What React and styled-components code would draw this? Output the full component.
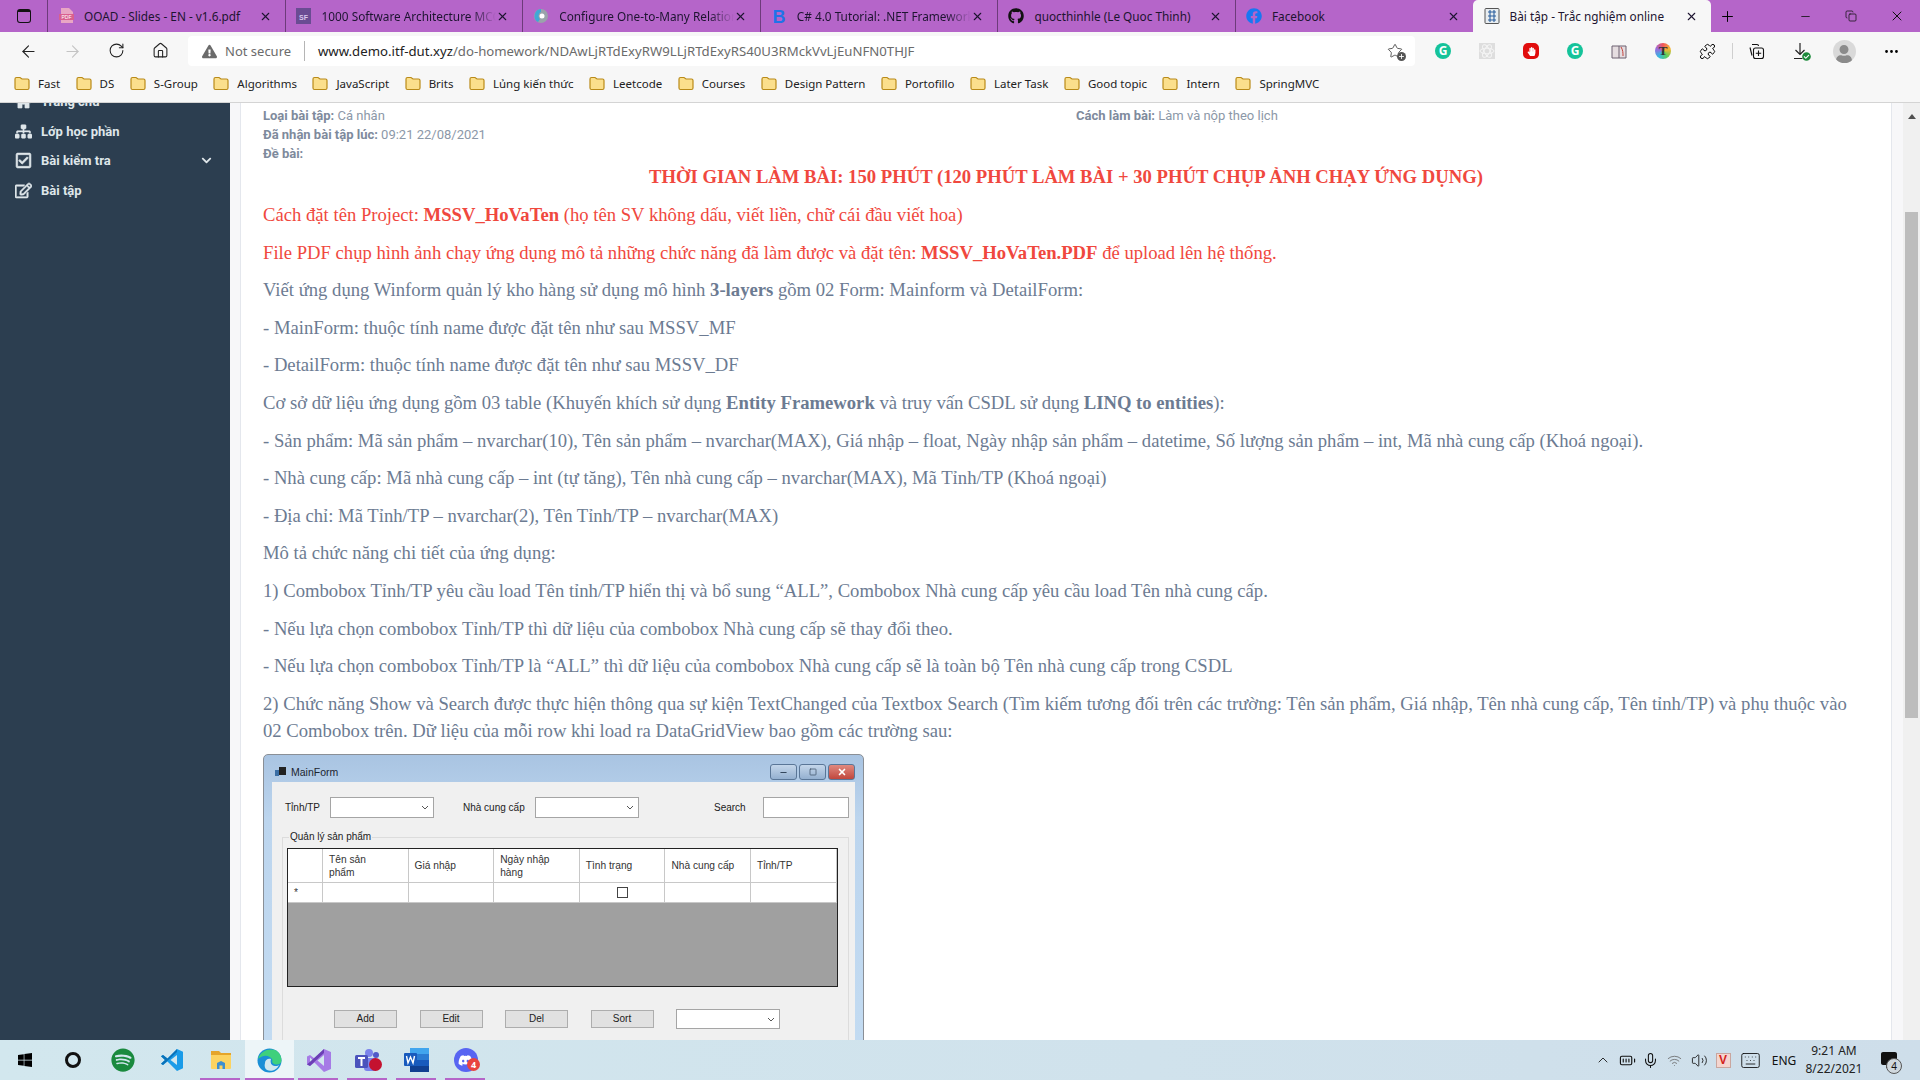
import React from 'react';
import styled, { createGlobalStyle } from 'styled-components';
import {
  ArrowLeft,
  ArrowRight,
  RotateCw,
  Home,
  Puzzle,
  Plus,
  Minus,
  X,
  Copy,
  Square,
  ChevronUp,
  Mic,
  Wifi,
  Volume2,
  Keyboard,
  BatteryFull,
  MoreHorizontal,
  Star,
} from 'lucide-react';
import {
  FaGithub,
  FaFacebook,
  FaSpotify,
  FaWindows,
  FaDiscord,
  FaHome,
  FaSitemap,
  FaRegCheckSquare,
  FaRegEdit,
  FaChevronDown,
  FaHandPaper,
  FaExclamationTriangle,
  FaUser,
  FaCheckCircle,
  FaCommentAlt,
} from 'react-icons/fa';

const UI_FONT = '"Noto Sans", "Open Sans", sans-serif';

const GlobalStyle = createGlobalStyle`
  * { box-sizing: border-box; }
  html, body { margin: 0; padding: 0; height: 100%; overflow: hidden; }
  body { font-family: ${UI_FONT}; background: #fff; }
`;

const Screen = styled.div`
  width: 1920px;
  height: 1080px;
  display: flex;
  flex-direction: column;
  overflow: hidden;
`;

/* ---------- tabs ---------- */
const TabBar = styled.div`
  height: 32px;
  flex: none;
  display: flex;
  align-items: stretch;
  background: #b565c9;
`;
const TabMenu = styled.div`
  width: 47px;
  display: flex;
  align-items: center;
  justify-content: center;
  & > span {
    width: 14px;
    height: 14px;
    border: 1.6px solid #111;
    border-top-width: 3px;
    border-radius: 3px;
  }
`;
const Tab = styled.div`
  width: ${(p) => (p.$active ? '238px' : '237.6px')};
  flex: none;
  display: flex;
  align-items: center;
  padding: 0 10px;
  font-size: 11.8px;
  color: #1d1430;
  background: ${(p) => (p.$active ? '#f7f7f7' : 'transparent')};
  border-radius: ${(p) => (p.$active ? '5px 5px 0 0' : '0')};
  border-left: ${(p) => (p.$active ? '1px solid transparent' : '1px solid #6d3b7a')};
`;
const TabIcon = styled.span`
  width: 16px;
  height: 16px;
  margin-right: 10px;
  flex: none;
  display: flex;
  align-items: center;
  justify-content: center;
  font-size: 16px;
  color: ${(p) => p.$color || '#111'};
`;
const TabTitle = styled.span`
  flex: 1;
  min-width: 0;
  white-space: nowrap;
  overflow: hidden;
  mask-image: ${(p) => (p.$fade ? 'linear-gradient(90deg, #000 86%, transparent)' : 'none')};
`;
const TabClose = styled.span`
  flex: none;
  display: flex;
  margin-right: 3px;
`;
const NewTab = styled.div`
  width: 34px;
  display: flex;
  align-items: center;
  justify-content: center;
`;
const WindowControls = styled.div`
  margin-left: auto;
  display: flex;
`;
const WindowButton = styled.div`
  width: 46px;
  display: flex;
  align-items: center;
  justify-content: center;
  color: #111;
`;

/* ---------- toolbar ---------- */
const Toolbar = styled.div`
  height: 36px;
  flex: none;
  background: #f7f7f7;
  display: flex;
  align-items: center;
  padding-top: 2px;
`;
const NavButton = styled.div`
  width: 44px;
  display: flex;
  justify-content: center;
  color: ${(p) => (p.$off ? '#c4c4c4' : '#222')};
`;
const NavGroup = styled.div`
  display: flex;
  padding-left: 6px;
  width: 188px;
`;
const AddressBar = styled.div`
  width: 1227px;
  height: 30px;
  flex: none;
  background: #fff;
  border-radius: 4px;
  display: flex;
  align-items: center;
  padding: 0 12px 0 14px;
  font-size: 13.2px;
`;
const NotSecure = styled.span`
  display: flex;
  align-items: center;
  gap: 8px;
  color: #6b6b6b;
  width: 103px;
  height: 20px;
  font-size: 13px;
  white-space: nowrap;
  border-right: 1px solid #b5b5b5;
`;
const Url = styled.span`
  margin-left: 13px;
  color: #6b6b6b;
  white-space: nowrap;
  & > b { color: #222; font-weight: 400; }
`;
const StarSlot = styled.span`
  margin-left: auto;
  display: flex;
  position: relative;
  color: #444;
`;
const StarBadge = styled.span`
  position: absolute;
  right: -3px;
  bottom: -2px;
  width: 9px;
  height: 9px;
  border-radius: 50%;
  background: #555;
  color: #fff;
  display: flex;
  align-items: center;
  justify-content: center;
`;
const Extensions = styled.div`
  display: flex;
  align-items: center;
  padding-left: 6px;
`;
const ExtSlot = styled.div`
  width: 44px;
  height: 28px;
  flex: none;
  display: flex;
  align-items: center;
  justify-content: center;
  position: relative;
  margin-left: ${(p) => p.$gap || 0}px;
`;
const ExtDivider = styled.span`
  width: 1px;
  height: 16px;
  margin: 0 1px 0 3px;
  background: #cfcfcf;
`;
const Grammarly = styled.span`
  width: 16px;
  height: 16px;
  border-radius: 50%;
  background: #15c39a;
  color: #fff;
  font: 700 12px/16px ${UI_FONT};
  text-align: center;
`;
const AtomBox = styled.span`
  width: 16px;
  height: 16px;
  background: #dedede;
  display: flex;
`;
const BlockIcon = styled.span`
  width: 16px;
  height: 16px;
  border-radius: 5px;
  background: #e10d0d;
  color: #fff;
  font-size: 9px;
  display: flex;
  align-items: center;
  justify-content: center;
`;
const RainbowT = styled.span`
  width: 16px;
  height: 16px;
  border-radius: 50%;
  background: conic-gradient(#f2555a, #f7b733, #5ad05a, #35b8e0, #9a6be0, #f2555a);
  color: #333;
  font: 700 13px/16px "Liberation Serif", serif;
  text-align: center;
`;
const Avatar = styled.span`
  width: 23px;
  height: 23px;
  border-radius: 50%;
  background: #d9d9d9;
  color: #8b8b8b;
  font-size: 18px;
  display: flex;
  align-items: flex-end;
  justify-content: center;
  overflow: hidden;
`;
const CheckBadge = styled.span`
  position: absolute;
  left: 24px;
  top: 15px;
  display: flex;
  font-size: 9px;
  color: #1e8a3c;
  background: #fff;
  border-radius: 50%;
`;

/* ---------- bookmarks ---------- */
const Bookmarks = styled.div`
  height: 35px;
  flex: none;
  background: #f7f7f7;
  border-bottom: 1px solid #d4d4d4;
  display: flex;
  align-items: center;
  gap: 15.5px;
  padding: 0 0 3px 14px;
`;
const Bookmark = styled.div`
  display: flex;
  align-items: center;
  gap: 8px;
  font-size: 11.5px;
  color: #222;
  white-space: nowrap;
`;

/* ---------- page ---------- */
const Main = styled.div`
  flex: 1;
  min-height: 0;
  display: flex;
  overflow: hidden;
`;
const Sidebar = styled.aside`
  width: 230px;
  flex: none;
  background: #2c3e50;
`;
const NavList = styled.nav`
  margin-top: -16px;
  font-family: Roboto, sans-serif;
`;
const NavItem = styled.div`
  height: 29.5px;
  display: flex;
  align-items: center;
  gap: 9px;
  padding: 0 18px 0 15px;
  font-size: 13px;
  font-weight: 700;
  color: #dfe6ea;
  & > svg:first-child {
    font-size: 17px;
    flex: none;
    width: 17px;
    stroke: currentColor;
    stroke-width: 18;
  }
  & > svg:last-child:not(:first-child) { margin-left: auto; font-size: 11px; }
`;
const Gutter = styled.div`
  width: 11px;
  flex: none;
  background: #f7f7f9;
  border-right: 1px solid #e4e7ed;
`;
const Content = styled.main`
  width: 1651px;
  flex: none;
  background: #fff;
  padding: 4px 22px 0;
  overflow: hidden;
  border-right: 1px solid #e4e7ed;
`;
const MetaGrid = styled.div`
  display: grid;
  height: 55.5px;
  grid-template-columns: 813px 1fr;
  grid-auto-rows: 18.8px;
  font: 400 13px/18.8px Roboto, sans-serif;
  color: #8c98a8;
`;
const MetaLabel = styled.b`
  font-weight: 700;
  color: #7e8a9c;
`;
const Rich = styled.div`
  font: 400 18.67px/27px "Liberation Serif", serif;
  color: #6c7b92;
`;
const Title = styled.div`
  text-align: center;
  font-weight: 700;
  color: #f0483e;
  margin-bottom: 11.5px;
`;
const Para = styled.p`
  margin: 0 0 10.6px;
  color: ${(p) => (p.$red ? '#f0483e' : 'inherit')};
`;
const Rail = styled.div`
  width: 11px;
  flex: none;
  background: #f7f7f9;
`;
const Scrollbar = styled.div`
  width: 17px;
  flex: none;
  background: #f0f0f0;
  display: flex;
  flex-direction: column;
  align-items: center;
  padding-top: 11px;
`;
const ScrollUp = styled.span`
  width: 0;
  height: 0;
  border-left: 4px solid transparent;
  border-right: 4px solid transparent;
  border-bottom: 5px solid #505050;
`;
const ScrollThumb = styled.span`
  width: 13px;
  height: 506px;
  margin-top: 93px;
  background: #bdbdbd;
`;

/* ---------- screenshot of the winform ---------- */
const FormWindow = styled.div`
  width: 601px;
  height: 320px;
  margin-top: 4px;
  background: linear-gradient(#a9c4e2, #bcd5ee 20%, #c4dcf2 100%);
  border: 1px solid #8a8f96;
  border-radius: 5px 5px 0 0;
  padding: 0 8px;
  font: 400 10px/12px "Liberation Sans", sans-serif;
  color: #222;
`;
const FormTitleBar = styled.div`
  height: 27px;
  padding: 7px 0 0 3px;
  display: flex;
  align-items: center;
  gap: 5px;
  font-size: 10.5px;
  color: #1c2530;
`;
const FormButtons = styled.div`
  margin-left: auto;
  display: flex;
  gap: 2px;
`;
const CaptionButton = styled.span`
  width: 27px;
  height: 16px;
  border: 1px solid #5a7697;
  border-radius: 3px;
  background: ${(p) => (p.$close ? 'linear-gradient(#e0897f, #c1473d)' : 'linear-gradient(#c4d6ea, #94b0d0)')};
  color: ${(p) => (p.$close ? '#fff' : '#33475c')};
  display: flex;
  align-items: center;
  justify-content: center;
`;
const FormPanel = styled.div`
  background: #f0f0f0;
  height: 290px;
  padding: 15px 8px 0 13px;
`;
const FilterRow = styled.div`
  display: flex;
  align-items: center;
  height: 21px;
`;
const FormLabel = styled.span`
  width: ${(p) => p.$w}px;
  margin-left: ${(p) => p.$gap || 0}px;
  flex: none;
  white-space: nowrap;
`;
const Combo = styled.span`
  width: ${(p) => p.$w || 104}px;
  height: ${(p) => p.$h || 21}px;
  margin-left: ${(p) => p.$gap || 0}px;
  flex: none;
  background: #fff;
  border: 1px solid #a5a5a5;
  display: flex;
  align-items: center;
  justify-content: flex-end;
  padding-right: 4px;
  color: #555;
`;
const GroupBox = styled.fieldset`
  margin: 13px 0 0 -3px;
  padding: 5px 0 0 4px;
  width: 567px;
  height: 220px;
  border: 1px solid #dcdcdc;
  & > legend { padding: 0 1px; margin-left: 2px; font-size: 10px; line-height: 12px; }
`;
const DataGrid = styled.div`
  width: 551px;
  height: 139px;
  border: 1.5px solid #222;
  background: #a0a0a0;
  display: grid;
  grid-template-columns: 35px repeat(6, 85.6px);
  grid-template-rows: 34px 20px;
  align-content: start;
`;
const GridCell = styled.div`
  background: #fff;
  border-right: 1px solid #c8c8c8;
  border-bottom: 1px solid #c8c8c8;
  display: flex;
  align-items: center;
  justify-content: ${(p) => (p.$center ? 'center' : 'flex-start')};
  padding: 0 6px;
  font-size: 10.2px;
  line-height: 13px;
  color: #333;
  white-space: pre-line;
`;
const CheckCell = styled.span`
  width: 11px;
  height: 11px;
  border: 1px solid #444;
`;
const ButtonRow = styled.div`
  display: flex;
  align-items: center;
  gap: 22.5px;
  margin: 22px 0 0 47px;
`;
const FormButton = styled.span`
  width: 63px;
  height: 18px;
  background: #e1e1e1;
  border: 1px solid #adadad;
  display: flex;
  align-items: center;
  justify-content: center;
`;

/* ---------- taskbar ---------- */
const Taskbar = styled.footer`
  height: 40px;
  flex: none;
  display: flex;
  background: linear-gradient(90deg, #d2e7ee, #d0e2ec 60%, #cedeea);
`;
const TaskSlot = styled.div`
  width: 49px;
  flex: none;
  position: relative;
  display: flex;
  align-items: center;
  justify-content: center;
  font-size: 24px;
  color: ${(p) => p.$color || '#000'};
  background: ${(p) => (p.$active ? '#edf5f8' : 'transparent')};
  &::after {
    content: '';
    display: ${(p) => (p.$running ? 'block' : 'none')};
    position: absolute;
    bottom: 0;
    left: ${(p) => (p.$active ? '0' : '4px')};
    right: ${(p) => (p.$active ? '0' : '5px')};
    height: 2px;
    background: #b565c9;
  }
`;
const CortanaRing = styled.span`
  width: 16px;
  height: 16px;
  margin-right: 2px;
  border: 3px solid #111;
  border-radius: 50%;
`;
const DiscordDisc = styled.span`
  width: 24px;
  height: 24px;
  border-radius: 50%;
  background: #5865f2;
  color: #fff;
  font-size: 15px;
  display: flex;
  align-items: center;
  justify-content: center;
`;
const SlotBadge = styled.span`
  position: absolute;
  left: 26px;
  top: 18px;
  width: 13px;
  height: 13px;
  border-radius: 50%;
  background: ${(p) => p.$color};
  color: #fff;
  font: 700 9px/13px ${UI_FONT};
  text-align: center;
`;
const Tray = styled.div`
  margin-left: auto;
  display: flex;
  align-items: center;
  padding-right: 8px;
`;
const TraySlot = styled.div`
  width: ${(p) => p.$w || 24}px;
  flex: none;
  display: flex;
  align-items: center;
  justify-content: center;
  position: relative;
  color: #111;
  font-size: 12px;
`;
const VBox = styled.span`
  width: 15px;
  height: 15px;
  background: #f5d5cf;
  border: 1px solid #c9a69f;
  color: #d3231c;
  font: 700 12px/13px "Liberation Sans", sans-serif;
  text-align: center;
`;
const Clock = styled.div`
  text-align: center;
  font-size: 12px;
  line-height: 18px;
  color: #222;
`;
const NotifCount = styled.span`
  position: absolute;
  left: 21px;
  top: 6px;
  width: 16px;
  height: 16px;
  border-radius: 50%;
  background: #d0d8de;
  border: 1px solid #555;
  font-size: 10px;
  line-height: 14px;
  text-align: center;
`;

/* ---------- small drawings ---------- */
const FolderIcon = () => (
  <svg width="16" height="15" viewBox="0 0 16 15">
    <path d="M1 3a1.5 1.5 0 0 1 1.5-1.5H6L8 3h5.5A1.5 1.5 0 0 1 15 4.5V12a1.5 1.5 0 0 1-1.5 1.5h-11A1.5 1.5 0 0 1 1 12z" fill="#fbdf8c" stroke="#b98a18" strokeWidth="1.2" />
  </svg>
);
const PdfIcon = () => (
  <svg width="15" height="16" viewBox="0 0 15 16">
    <path d="M2 0h8l4 4v11H2z" fill="#e9a6c4" />
    <rect x="0" y="6" width="15" height="6" fill="#d9608f" />
    <text x="7.5" y="11" fontSize="5" fill="#fff" textAnchor="middle" fontFamily="Liberation Sans">PDF</text>
  </svg>
);
const SfIcon = () => (
  <svg width="15" height="16" viewBox="0 0 15 16">
    <rect width="15" height="16" fill="#6a4c93" />
    <text x="7.5" y="12" fontSize="7" fontWeight="700" fill="#d8c8ee" textAnchor="middle" fontFamily="Liberation Sans">SF</text>
  </svg>
);
const EfIcon = () => (
  <svg width="16" height="16" viewBox="0 0 16 16">
    <circle cx="8" cy="8" r="7" fill="#9aa3ab" />
    <path d="M8 1a7 7 0 0 0-3 13l2-3c-2-1-2-6 1-7z" fill="#3fa7d6" />
    <circle cx="9" cy="8" r="2.5" fill="#fff" />
  </svg>
);
const BootIcon = () => (
  <svg width="16" height="16" viewBox="0 0 16 16">
    <text x="8" y="15" fontSize="18" fontWeight="700" fill="#1f73e8" textAnchor="middle" fontFamily="Liberation Sans">B</text>
  </svg>
);
const SiteIcon = () => (
  <svg width="16" height="16" viewBox="0 0 16 16">
    <rect x="1" y="0.5" width="14" height="15" rx="1" fill="#e8edf0" stroke="#555" />
    <path d="M4 4h8M4 8h8M4 12h8M6 2v12M10 2v12" stroke="#2a5f9e" strokeWidth="1.1" />
  </svg>
);
const AtomIcon = () => (
  <svg width="16" height="16" viewBox="0 0 16 16" fill="none" stroke="#f5f5f5">
    <ellipse cx="8" cy="8" rx="7" ry="2.800" />
    <ellipse cx="8" cy="8" rx="7" ry="2.800" transform="rotate(60 8 8)" />
    <ellipse cx="8" cy="8" rx="7" ry="2.800" transform="rotate(120 8 8)" />
  </svg>
);
const BookIcon = () => (
  <svg width="16" height="15" viewBox="0 0 16 15">
    <path d="M1 2h14v12H1z" fill="#e5dde0" stroke="#6d6070" />
    <path d="M8 2v12" stroke="#6d6070" />
    <path d="M10 3c2 3 2 6 2 9" stroke="#c2413b" fill="none" />
  </svg>
);
const CollectionsIcon = () => (
  <svg width="18" height="18" viewBox="0 0 18 18" fill="none" stroke="#111" strokeWidth="1.100">
    <path d="M5 2.500h5a1.500 1.500 0 0 1 1.500 1.500M3 5.500l2 8" />
    <rect x="6.500" y="6" width="10" height="10.500" rx="2" />
    <path d="M11.500 8.500v5.500M8.800 11.200h5.400" />
  </svg>
);
const VsCodeIcon = () => (
  <svg width="24" height="24" viewBox="0 0 24 24">
    <path d="M17 1 7.5 10.5 3 7 1 8.2 5 12l-4 3.8L3 17l4.5-3.5L17 23l6-2.8V3.8z" fill="#1a9be8" />
    <path d="M17 7 10.5 12 17 17z" fill="#d2e7ee" />
    <path d="M17 1 7.5 10.5 3 7 1 8.2 5 12l-4 3.8L3 17 17 4z" fill="#0a72b8" />
  </svg>
);
const ExplorerIcon = () => (
  <svg width="24" height="24" viewBox="0 0 24 24">
    <path d="M2 3h8l2 2h10v3H2z" fill="#e5a52a" />
    <path d="M2 7h20v13a1 1 0 0 1-1 1H3a1 1 0 0 1-1-1z" fill="#fcd361" />
    <path d="M8 21v-6l4-2 4 2v6z" fill="#3d8fd1" />
    <path d="M10.5 17.5h3V21h-3z" fill="#fcd361" />
  </svg>
);
const EdgeIcon = () => (
  <svg width="25" height="25" viewBox="0 0 25 25">
    <circle cx="12.5" cy="12.5" r="12" fill="#1b8fd6" />
    <path d="M1 11C3 3 12 0 18 2c4 1.500 6.500 6 6.500 10.500 0 3-3 4.500-6 4-3-.5-4-2.500-3-4.500C14 8.500 9 6.500 5 8.500 3 9.500 2 10 1 11z" fill="#3fd07c" />
    <path d="M8 15c0-3 3-5 6-4-1 3 0 7 4 7 1.500 0 3 0 4-1-2 5-8 7-12 5-2-1-3-4-2-7z" fill="#d2e7ee" />
  </svg>
);
const VsIcon = () => (
  <svg width="24" height="25" viewBox="0 0 24 25">
    <path d="M17 1 7.500 10.500 3 7l-3 1.500v8L3 18l4.500-3.500L17 24l7-3V4z" fill="#a67be6" />
    <path d="M17 7l-6.500 5.500L17 18z" fill="#d2e7ee" />
    <path d="M3 9.500 6 12.500 3 15.500z" fill="#d2e7ee" />
    <path d="M17 1 0 16.500 3 18 17 5z" fill="#6b3fb5" />
  </svg>
);
const TeamsIcon = () => (
  <svg width="25" height="25" viewBox="0 0 25 25">
    <circle cx="14" cy="5" r="4" fill="#7b83eb" />
    <circle cx="21" cy="7" r="3" fill="#5059c9" />
    <rect x="9" y="10" width="13" height="13" rx="3" fill="#7b83eb" />
    <rect x="0" y="7" width="13" height="13" rx="1.500" fill="#4b53bc" />
    <path d="M3 10h7M6.500 10v8" stroke="#fff" strokeWidth="2" />
  </svg>
);
const WordIcon = () => (
  <svg width="25" height="24" viewBox="0 0 25 24">
    <rect x="6" y="0" width="19" height="24" rx="1" fill="#2b7cd3" />
    <rect x="6" y="0" width="19" height="6" fill="#41a5ee" />
    <rect x="6" y="12" width="19" height="6" fill="#185abd" />
    <rect x="6" y="18" width="19" height="6" fill="#103f91" />
    <rect x="0" y="5" width="13" height="13" rx="1" fill="#185abd" />
    <path d="M2.500 8l1.500 7 2.500-6 2.500 6 1.500-7" fill="none" stroke="#fff" strokeWidth="1.400" />
  </svg>
);
const FormIcon = () => (
  <svg width="11" height="10" viewBox="0 0 11 10">
    <rect x="4" y="0" width="7" height="8" fill="#222" />
    <rect x="0" y="3" width="4" height="6" fill="#3a6ea5" />
  </svg>
);
const SmallChevron = () => (
  <svg width="8" height="5" viewBox="0 0 8 5">
    <path d="M1 1l3 3 3-3" fill="none" stroke="#555" />
  </svg>
);

/* ---------- data ---------- */
const TABS = [
  { title: 'OOAD - Slides - EN - v1.6.pdf', icon: <PdfIcon /> },
  { title: '1000 Software Architecture MCQ', icon: <SfIcon />, fade: true },
  { title: 'Configure One-to-Many Relationship', icon: <EfIcon />, fade: true },
  { title: 'C# 4.0 Tutorial: .NET Framework', icon: <BootIcon />, fade: true },
  { title: 'quocthinhle (Le Quoc Thinh)', icon: <FaGithub /> },
  { title: 'Facebook', icon: <FaFacebook />, color: '#1877f2' },
];
const BOOKMARKS = [
  'Fast',
  'DS',
  'S-Group',
  'Algorithms',
  'JavaScript',
  'Brits',
  'Lủng kiến thức',
  'Leetcode',
  'Courses',
  'Design Pattern',
  'Portofillo',
  'Later Task',
  'Good topic',
  'Intern',
  'SpringMVC',
];
const COLUMNS = ['Tên sản\nphẩm', 'Giá nhập', 'Ngày nhập\nhàng', 'Tình trạng', 'Nhà cung cấp', 'Tỉnh/TP'];

const Winform = () => (
  <FormWindow>
    <FormTitleBar>
      <FormIcon />
      MainForm
      <FormButtons>
        <CaptionButton><Minus size={9} strokeWidth={3} /></CaptionButton>
        <CaptionButton><Square size={8} strokeWidth={2} /></CaptionButton>
        <CaptionButton $close><X size={10} strokeWidth={4} /></CaptionButton>
      </FormButtons>
    </FormTitleBar>
    <FormPanel>
      <FilterRow>
        <FormLabel $w={45}>Tỉnh/TP</FormLabel>
        <Combo><SmallChevron /></Combo>
        <FormLabel $w={72} $gap={29}>Nhà cung cấp</FormLabel>
        <Combo><SmallChevron /></Combo>
        <FormLabel $w={49} $gap={75}>Search</FormLabel>
        <Combo $w={86} />
      </FilterRow>
      <GroupBox>
        <legend>Quản lý sản phẩm</legend>
        <DataGrid>
          <GridCell />
          {COLUMNS.map((name) => (
            <GridCell key={name}>{name}</GridCell>
          ))}
          <GridCell>*</GridCell>
          <GridCell />
          <GridCell />
          <GridCell />
          <GridCell $center><CheckCell /></GridCell>
          <GridCell />
          <GridCell />
        </DataGrid>
        <ButtonRow>
          <FormButton>Add</FormButton>
          <FormButton>Edit</FormButton>
          <FormButton>Del</FormButton>
          <FormButton>Sort</FormButton>
          <Combo $h={20}><SmallChevron /></Combo>
        </ButtonRow>
      </GroupBox>
    </FormPanel>
  </FormWindow>
);

export default function App() {
  return (
    <Screen>
      <GlobalStyle />
      <TabBar>
        <TabMenu><span /></TabMenu>
        {TABS.map((tab) => (
          <Tab key={tab.title}>
            <TabIcon $color={tab.color}>{tab.icon}</TabIcon>
            <TabTitle $fade={tab.fade}>{tab.title}</TabTitle>
            <TabClose><X size={13} strokeWidth={2} /></TabClose>
          </Tab>
        ))}
        <Tab $active>
          <TabIcon><SiteIcon /></TabIcon>
          <TabTitle>Bài tập - Trắc nghiệm online</TabTitle>
          <TabClose><X size={13} strokeWidth={2} /></TabClose>
        </Tab>
        <NewTab><Plus size={17} strokeWidth={1.4} /></NewTab>
        <WindowControls>
          <WindowButton><Minus size={13} strokeWidth={1.5} color="#111" /></WindowButton>
          <WindowButton><Copy size={12} strokeWidth={1.5} color="#111" /></WindowButton>
          <WindowButton><X size={16} strokeWidth={1.5} color="#111" /></WindowButton>
        </WindowControls>
      </TabBar>

      <Toolbar>
        <NavGroup>
          <NavButton><ArrowLeft size={19} strokeWidth={1.4} /></NavButton>
          <NavButton $off><ArrowRight size={19} strokeWidth={1.4} /></NavButton>
          <NavButton><RotateCw size={17} strokeWidth={1.5} /></NavButton>
          <NavButton><Home size={17} strokeWidth={1.5} /></NavButton>
        </NavGroup>
        <AddressBar>
          <NotSecure>
            <FaExclamationTriangle size={15} />
            Not secure
          </NotSecure>
          <Url><b>www.demo.itf-dut.xyz</b>/do-homework/NDAwLjRTdExyRW9LLjRTdExyRS40U3RMckVvLjEuNFN0THJF</Url>
          <StarSlot>
            <Star size={16} strokeWidth={1.3} />
            <StarBadge><Plus size={7} strokeWidth={3} /></StarBadge>
          </StarSlot>
        </AddressBar>
        <Extensions>
          <ExtSlot><Grammarly>G</Grammarly></ExtSlot>
          <ExtSlot><AtomBox><AtomIcon /></AtomBox></ExtSlot>
          <ExtSlot><BlockIcon><FaHandPaper /></BlockIcon></ExtSlot>
          <ExtSlot><Grammarly>G</Grammarly></ExtSlot>
          <ExtSlot><BookIcon /></ExtSlot>
          <ExtSlot><RainbowT>T</RainbowT></ExtSlot>
          <ExtSlot><Puzzle size={17} strokeWidth={1.4} /></ExtSlot>
          <ExtDivider />
          <ExtSlot><CollectionsIcon /></ExtSlot>
          <ExtSlot>
            <svg width="14" height="18" viewBox="0 0 14 18">
              <path d="M7 1v11M2.500 8 7 12.500 11.500 8M1 16.500h12" fill="none" stroke="#222" strokeWidth="1.200" />
            </svg>
            <CheckBadge><FaCheckCircle /></CheckBadge>
          </ExtSlot>
          <ExtSlot><Avatar><FaUser /></Avatar></ExtSlot>
          <ExtSlot $gap={3}><MoreHorizontal size={17} strokeWidth={2} /></ExtSlot>
        </Extensions>
      </Toolbar>

      <Bookmarks>
        {BOOKMARKS.map((name) => (
          <Bookmark key={name}>
            <FolderIcon />
            {name}
          </Bookmark>
        ))}
      </Bookmarks>

      <Main>
        <Sidebar>
          <NavList>
            <NavItem><FaHome />Trang chủ</NavItem>
            <NavItem><FaSitemap />Lớp học phần</NavItem>
            <NavItem><FaRegCheckSquare />Bài kiểm tra<FaChevronDown /></NavItem>
            <NavItem><FaRegEdit />Bài tập</NavItem>
          </NavList>
        </Sidebar>
        <Gutter />
        <Content>
          <MetaGrid>
            <span><MetaLabel>Loại bài tập:</MetaLabel> Cá nhân</span>
            <span><MetaLabel>Cách làm bài:</MetaLabel> Làm và nộp theo lịch</span>
            <span><MetaLabel>Đã nhận bài tập lúc:</MetaLabel> 09:21 22/08/2021</span>
            <span />
            <span><MetaLabel>Đề bài:</MetaLabel></span>
          </MetaGrid>
          <Rich>
            <Title>THỜI GIAN LÀM BÀI: 150 PHÚT (120 PHÚT LÀM BÀI + 30 PHÚT CHỤP ẢNH CHẠY ỨNG DỤNG)</Title>
            <Para $red>Cách đặt tên Project: <b>MSSV_HoVaTen</b> (họ tên SV không dấu, viết liền, chữ cái đầu viết hoa)</Para>
            <Para $red>File PDF chụp hình ảnh chạy ứng dụng mô tả những chức năng đã làm được và đặt tên: <b>MSSV_HoVaTen.PDF</b> để upload lên hệ thống.</Para>
            <Para>Viết ứng dụng Winform quản lý kho hàng sử dụng mô hình <b>3-layers</b> gồm 02 Form: Mainform và DetailForm:</Para>
            <Para>- MainForm: thuộc tính name được đặt tên như sau MSSV_MF</Para>
            <Para>- DetailForm: thuộc tính name được đặt tên như sau MSSV_DF</Para>
            <Para>Cơ sở dữ liệu ứng dụng gồm 03 table (Khuyến khích sử dụng <b>Entity Framework</b> và truy vấn CSDL sử dụng <b>LINQ to entities</b>):</Para>
            <Para>- Sản phẩm: Mã sản phẩm – nvarchar(10), Tên sản phẩm – nvarchar(MAX), Giá nhập – float, Ngày nhập sản phẩm – datetime, Số lượng sản phẩm – int, Mã nhà cung cấp (Khoá ngoại).</Para>
            <Para>- Nhà cung cấp: Mã nhà cung cấp – int (tự tăng), Tên nhà cung cấp – nvarchar(MAX), Mã Tỉnh/TP (Khoá ngoại)</Para>
            <Para>- Địa chỉ: Mã Tỉnh/TP – nvarchar(2), Tên Tỉnh/TP – nvarchar(MAX)</Para>
            <Para>Mô tả chức năng chi tiết của ứng dụng:</Para>
            <Para>1) Combobox Tỉnh/TP yêu cầu load Tên tỉnh/TP hiển thị và bổ sung “ALL”, Combobox Nhà cung cấp yêu cầu load Tên nhà cung cấp.</Para>
            <Para>- Nếu lựa chọn combobox Tỉnh/TP thì dữ liệu của combobox Nhà cung cấp sẽ thay đổi theo.</Para>
            <Para>- Nếu lựa chọn combobox Tỉnh/TP là “ALL” thì dữ liệu của combobox Nhà cung cấp sẽ là toàn bộ Tên nhà cung cấp trong CSDL</Para>
            <Para>2) Chức năng Show và Search được thực hiện thông qua sự kiện TextChanged của Textbox Search (Tìm kiếm tương đối trên các trường: Tên sản phẩm, Giá nhập, Tên nhà cung cấp, Tên tỉnh/TP) và phụ thuộc vào 02 Combobox trên. Dữ liệu của mỗi row khi load ra DataGridView bao gồm các trường sau:</Para>
          </Rich>
          <Winform />
        </Content>
        <Rail />
        <Scrollbar>
          <ScrollUp />
          <ScrollThumb />
        </Scrollbar>
      </Main>

      <Taskbar>
        <TaskSlot><FaWindows size={16} /></TaskSlot>
        <TaskSlot><CortanaRing /></TaskSlot>
        <TaskSlot $color="#1a8a3e"><FaSpotify /></TaskSlot>
        <TaskSlot><VsCodeIcon /></TaskSlot>
        <TaskSlot $running><ExplorerIcon /></TaskSlot>
        <TaskSlot $running $active><EdgeIcon /></TaskSlot>
        <TaskSlot $running><VsIcon /></TaskSlot>
        <TaskSlot $running><TeamsIcon /><SlotBadge $color="#c4122f" /></TaskSlot>
        <TaskSlot $running><WordIcon /></TaskSlot>
        <TaskSlot $running><DiscordDisc><FaDiscord /></DiscordDisc><SlotBadge $color="#e8433f">4</SlotBadge></TaskSlot>
        <Tray>
          <TraySlot><ChevronUp size={16} strokeWidth={1.3} /></TraySlot>
          <TraySlot><BatteryFull size={17} strokeWidth={1.6} /></TraySlot>
          <TraySlot $w={23}><Mic size={17} strokeWidth={1.5} /></TraySlot>
          <TraySlot $w={25}><Wifi size={15} strokeWidth={1.3} color="#666" /></TraySlot>
          <TraySlot><Volume2 size={17} strokeWidth={1.2} /></TraySlot>
          <TraySlot><VBox>V</VBox></TraySlot>
          <TraySlot $w={30}><Keyboard size={21} strokeWidth={1} /></TraySlot>
          <TraySlot $w={38}>ENG</TraySlot>
          <TraySlot $w={62}>
            <Clock>9:21 AM<br />8/22/2021</Clock>
          </TraySlot>
          <TraySlot $w={47}>
            <FaCommentAlt size={16} />
            <NotifCount>4</NotifCount>
          </TraySlot>
        </Tray>
      </Taskbar>
    </Screen>
  );
}
